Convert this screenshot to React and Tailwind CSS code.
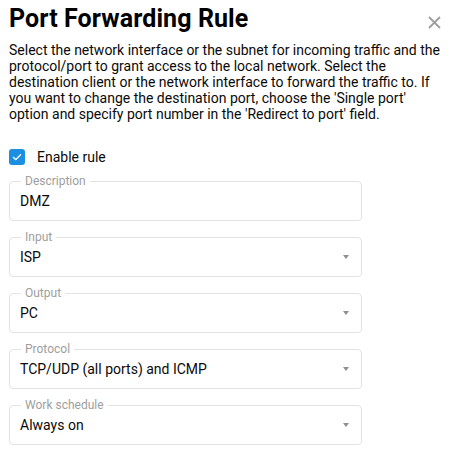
import React, { useState } from 'react';

const fields = [
  { label: 'Description', value: 'DMZ', select: false },
  { label: 'Input', value: 'ISP', select: true },
  { label: 'Output', value: 'PC', select: true },
  { label: 'Protocol', value: 'TCP/UDP (all ports) and ICMP', select: true },
  { label: 'Work schedule', value: 'Always on', select: true },
];

const Field = ({ label, value, select }) => (
  <div className="relative h-[40px] w-[353px] rounded border border-[#e3e3e3]">
    <span className="absolute left-[11px] top-[-9px] bg-white px-[4px] text-[12px] leading-[16px] text-[#9e9e9e]">
      {label}
    </span>
    <div className="flex h-full items-center justify-between pl-[10px] pr-[12px]">
      <span className="text-[14px] text-[#0a0a0a]">{value}</span>
      {select && (
        <svg width="6" height="4" viewBox="0 0 6 4">
          <path d="M0 0 H6 L3 4 Z" fill="#8f8f8f" />
        </svg>
      )}
    </div>
  </div>
);

const App = () => {
  const [enabled, setEnabled] = useState(true);

  return (
    <div className="relative h-[456px] w-[453px] overflow-hidden bg-white pl-[9px] font-['Roboto',sans-serif] text-[#0a0a0a]">
      {/* Header */}
      <div className="flex items-start justify-between pt-[4px]">
        <h1 className="text-[25px] font-bold leading-[30px] tracking-[0.1px] text-black">Port Forwarding Rule</h1>
        <button className="mr-[12px] mt-[11px] flex h-[14px] w-[14px] items-center justify-center">
          <svg width="13" height="13" viewBox="0 0 13 13">
            <path d="M1 1 L12 12 M12 1 L1 12" stroke="#9e9e9e" strokeWidth="1.8" />
          </svg>
        </button>
      </div>

      <p className="mt-[8px] pr-[8px] text-[14px] leading-[16px]">
        Select the network interface or the subnet for incoming traffic and the protocol/port to grant access to the
        local network. Select the destination client or the network interface to forward the traffic to. If you want
        to change the destination port, choose the 'Single port' option and specify port number in the 'Redirect to
        port' field.
      </p>

      {/* Enable rule */}
      <label className="mt-[27px] flex cursor-pointer items-center gap-[12px]">
        <span
          onClick={() => setEnabled(!enabled)}
          className="flex h-[16px] w-[16px] items-center justify-center rounded-[3px] bg-[#1d8fe0]"
        >
          {enabled && (
            <svg width="10" height="8" viewBox="0 0 10 8">
              <path d="M1 4 L3.8 6.6 L9 1.2" stroke="white" strokeWidth="1.3" fill="none" />
            </svg>
          )}
        </span>
        <span className="text-[14px] leading-[16px]">Enable rule</span>
      </label>

      {/* Fields */}
      <div className="mt-[16px] flex flex-col gap-[16px]">
        {fields.map((f) => (
          <Field key={f.label} {...f} />
        ))}
      </div>
    </div>
  );
};

export default App;
